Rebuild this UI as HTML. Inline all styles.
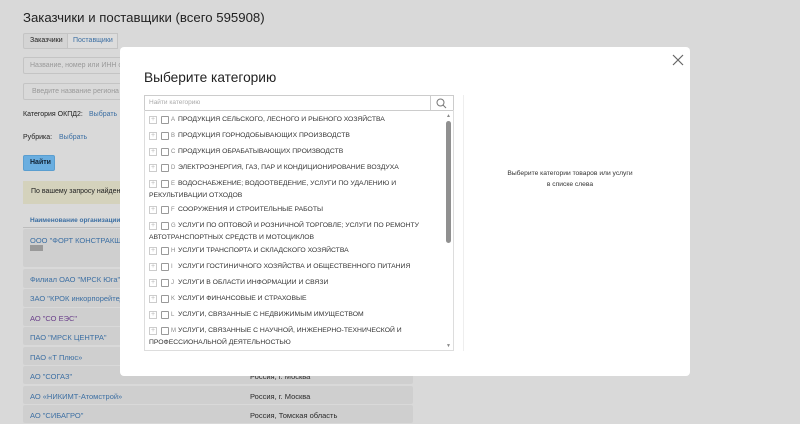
<!DOCTYPE html>
<html><head><meta charset="utf-8"><style>
*{box-sizing:border-box;margin:0;padding:0}
body{width:800px;height:424px;overflow:hidden;background:#d9d9d9;font-family:"Liberation Sans",sans-serif;position:relative}
.a{position:absolute;white-space:nowrap}
.bg{color:#2b2b2b}
.lnk{color:#3c6fa3}
.row{position:absolute;left:23px;width:390px;background:#cfcfcf;border-radius:2px}
.modal{position:absolute;left:120px;top:47px;width:570px;height:329px;background:#fff;border-radius:4px}
.it{position:absolute;left:29px;font-size:6.8px;color:#333;line-height:12px;white-space:nowrap}
.pl{position:absolute;left:0;top:2px;width:8px;height:8px;border:1px solid #ccc;font-size:7px;color:#bbb;line-height:6px;text-align:center}
.cb{position:absolute;left:12px;top:2px;width:8px;height:8px;border:1px solid #999;border-radius:1px}
.lt{position:absolute;left:22px;top:0;font-size:6px;color:#888}
.tx{position:absolute;left:29px;top:0;white-space:nowrap}
</style></head><body>
<div class="a bg" style="left:23px;top:10px;font-size:13.2px;color:#222">Заказчики и поставщики (всего 595908)</div>
<div class="a" style="left:23px;top:33px;width:95px;height:16px;border:1px solid #c4c4c4;border-radius:2px;background:#d4d4d4"></div>
<div class="a" style="left:67px;top:33px;width:51px;height:16px;background:#dcdcdc;border:1px solid #c4c4c4"></div>
<div class="a" style="left:30px;top:37px;font-size:7px;color:#222">Заказчики</div>
<div class="a lnk" style="left:73px;top:37px;font-size:7px">Поставщики</div>
<div class="a" style="left:23px;top:57px;width:100px;height:17px;border:1px solid #c4c4c4;border-radius:2px"></div>
<div class="a" style="left:30px;top:62px;font-size:7px;color:#999">Название, номер или ИНН ор</div>
<div class="a" style="left:23px;top:83px;width:100px;height:17px;border:1px solid #c4c4c4;border-radius:2px"></div>
<div class="a" style="left:32px;top:88px;font-size:7px;color:#999">Введите название региона</div>
<div class="a" style="left:23px;top:111px;font-size:7px;color:#222">Категория ОКПД2:</div>
<div class="a lnk" style="left:89px;top:111px;font-size:7px">Выбрать</div>
<div class="a" style="left:23px;top:134px;font-size:7px;color:#222">Рубрика:</div>
<div class="a lnk" style="left:59px;top:134px;font-size:7px">Выбрать</div>
<div class="a" style="left:23px;top:155px;width:32px;height:16px;background:#6aaee0;border-radius:2px;border:1px solid #5a9ed0"></div>
<div class="a" style="left:30px;top:159px;font-size:7px;color:#123;font-weight:bold">Найти</div>
<div class="a" style="left:23px;top:181px;width:110px;height:23px;background:#d4d2bc"></div>
<div class="a" style="left:31px;top:188px;font-size:7px;color:#222">По вашему запросу найдено</div>
<div class="a lnk" style="left:30px;top:217px;font-size:6.5px;font-weight:bold">Наименование организации</div>
<div class="a" style="left:23px;top:227px;width:390px;height:1px;background:#bdbdbd"></div>
<div class="row" style="top:229px;height:38px"></div>
<div class="a lnk" style="left:30px;top:236px;font-size:7.5px">ООО "ФОРТ КОНСТРАКШН"</div>
<div class="a" style="left:30px;top:245px;width:13px;height:6px;background:#999"></div>
<div class="row" style="top:269px;height:19px"></div>
<div class="a lnk" style="left:30px;top:275px;font-size:7.5px">Филиал ОАО "МРСК Юга" - "</div>
<div class="row" style="top:289px;height:18px"></div>
<div class="a lnk" style="left:30px;top:294px;font-size:7.5px">ЗАО "КРОК инкорпорейтед"</div>
<div class="row" style="top:308px;height:18px"></div>
<div class="a" style="left:30px;top:314px;font-size:7.5px;color:#6a3f8a">АО "СО ЕЭС"</div>
<div class="row" style="top:327px;height:18px"></div>
<div class="a lnk" style="left:30px;top:333px;font-size:7.5px">ПАО "МРСК ЦЕНТРА"</div>
<div class="row" style="top:347px;height:18px"></div>
<div class="a lnk" style="left:30px;top:353px;font-size:7.5px">ПАО «Т Плюс»</div>
<div class="row" style="top:366px;height:18px"></div>
<div class="a lnk" style="left:30px;top:372px;font-size:7.5px">АО "СОГАЗ"</div>
<div class="a bg" style="left:250px;top:372px;font-size:7.5px">Россия, г. Москва</div>
<div class="row" style="top:386px;height:18px"></div>
<div class="a lnk" style="left:30px;top:392px;font-size:7.5px">АО «НИКИМТ-Атомстрой»</div>
<div class="a bg" style="left:250px;top:392px;font-size:7.5px">Россия, г. Москва</div>
<div class="row" style="top:405px;height:18px"></div>
<div class="a lnk" style="left:30px;top:411px;font-size:7.5px">АО "СИБАГРО"</div>
<div class="a bg" style="left:250px;top:411px;font-size:7.5px">Россия, Томская область</div>

<div class="modal">
<svg style="position:absolute;left:552px;top:7px" width="12" height="12"><path d="M1 1L11 11M11 1L1 11" stroke="#666" stroke-width="1.2"/></svg>
<div class="a" style="left:24px;top:23px;font-size:13.7px;color:#222">Выберите категорию</div>
<div class="a" style="left:24px;top:48px;width:310px;height:16px;border:1px solid #ccc"></div>
<div class="a" style="left:310px;top:48px;width:24px;height:16px;border:1px solid #ccc"></div>
<svg style="position:absolute;left:316px;top:51px" width="11" height="11"><circle cx="4.5" cy="4.5" r="3.5" stroke="#777" fill="none"/><path d="M7 7L10 10" stroke="#777"/></svg>
<div class="a" style="left:29px;top:52px;font-size:6.5px;color:#aaa">Найти категорию</div>
<div class="a" style="left:24px;top:63px;width:310px;height:241px;border:1px solid #ddd;border-top:none"></div>
<div class="a" style="left:326px;top:74px;width:5px;height:122px;background:#909090;border-radius:3px"></div>
<div class="a" style="left:326px;top:66px;font-size:5px;color:#888">▲</div>
<div class="a" style="left:326px;top:296px;font-size:5px;color:#888">▼</div>
<div class="a" style="left:343px;top:48px;width:1px;height:256px;background:#eee"></div>
<div class="a" style="left:350px;top:121px;width:200px;text-align:center;font-size:6.7px;color:#333;line-height:11px">Выберите категории товаров или услуги<br>в списке слева</div>

<div class="it" style="top:67px"><div class="pl">+</div><div class="cb"></div><div class="lt">A</div><div class="tx">ПРОДУКЦИЯ СЕЛЬСКОГО, ЛЕСНОГО И РЫБНОГО ХОЗЯЙСТВА</div></div>
<div class="it" style="top:83px"><div class="pl">+</div><div class="cb"></div><div class="lt">B</div><div class="tx">ПРОДУКЦИЯ ГОРНОДОБЫВАЮЩИХ ПРОИЗВОДСТВ</div></div>
<div class="it" style="top:99px"><div class="pl">+</div><div class="cb"></div><div class="lt">C</div><div class="tx">ПРОДУКЦИЯ ОБРАБАТЫВАЮЩИХ ПРОИЗВОДСТВ</div></div>
<div class="it" style="top:115px"><div class="pl">+</div><div class="cb"></div><div class="lt">D</div><div class="tx">ЭЛЕКТРОЭНЕРГИЯ, ГАЗ, ПАР И КОНДИЦИОНИРОВАНИЕ ВОЗДУХА</div></div>
<div class="it" style="top:131px"><div class="pl">+</div><div class="cb"></div><div class="lt">E</div><div class="tx">ВОДОСНАБЖЕНИЕ; ВОДООТВЕДЕНИЕ, УСЛУГИ ПО УДАЛЕНИЮ И</div><div class="a" style="left:0;top:12px">РЕКУЛЬТИВАЦИИ ОТХОДОВ</div></div>
<div class="it" style="top:157px"><div class="pl">+</div><div class="cb"></div><div class="lt">F</div><div class="tx">СООРУЖЕНИЯ И СТРОИТЕЛЬНЫЕ РАБОТЫ</div></div>
<div class="it" style="top:173px"><div class="pl">+</div><div class="cb"></div><div class="lt">G</div><div class="tx">УСЛУГИ ПО ОПТОВОЙ И РОЗНИЧНОЙ ТОРГОВЛЕ; УСЛУГИ ПО РЕМОНТУ</div><div class="a" style="left:0;top:12px">АВТОТРАНСПОРТНЫХ СРЕДСТВ И МОТОЦИКЛОВ</div></div>
<div class="it" style="top:198px"><div class="pl">+</div><div class="cb"></div><div class="lt">H</div><div class="tx">УСЛУГИ ТРАНСПОРТА И СКЛАДСКОГО ХОЗЯЙСТВА</div></div>
<div class="it" style="top:214px"><div class="pl">+</div><div class="cb"></div><div class="lt">I</div><div class="tx">УСЛУГИ ГОСТИНИЧНОГО ХОЗЯЙСТВА И ОБЩЕСТВЕННОГО ПИТАНИЯ</div></div>
<div class="it" style="top:230px"><div class="pl">+</div><div class="cb"></div><div class="lt">J</div><div class="tx">УСЛУГИ В ОБЛАСТИ ИНФОРМАЦИИ И СВЯЗИ</div></div>
<div class="it" style="top:246px"><div class="pl">+</div><div class="cb"></div><div class="lt">K</div><div class="tx">УСЛУГИ ФИНАНСОВЫЕ И СТРАХОВЫЕ</div></div>
<div class="it" style="top:262px"><div class="pl">+</div><div class="cb"></div><div class="lt">L</div><div class="tx">УСЛУГИ, СВЯЗАННЫЕ С НЕДВИЖИМЫМ ИМУЩЕСТВОМ</div></div>
<div class="it" style="top:278px"><div class="pl">+</div><div class="cb"></div><div class="lt">M</div><div class="tx">УСЛУГИ, СВЯЗАННЫЕ С НАУЧНОЙ, ИНЖЕНЕРНО-ТЕХНИЧЕСКОЙ И</div><div class="a" style="left:0;top:12px">ПРОФЕССИОНАЛЬНОЙ ДЕЯТЕЛЬНОСТЬЮ</div></div>
</div>
</body></html>
